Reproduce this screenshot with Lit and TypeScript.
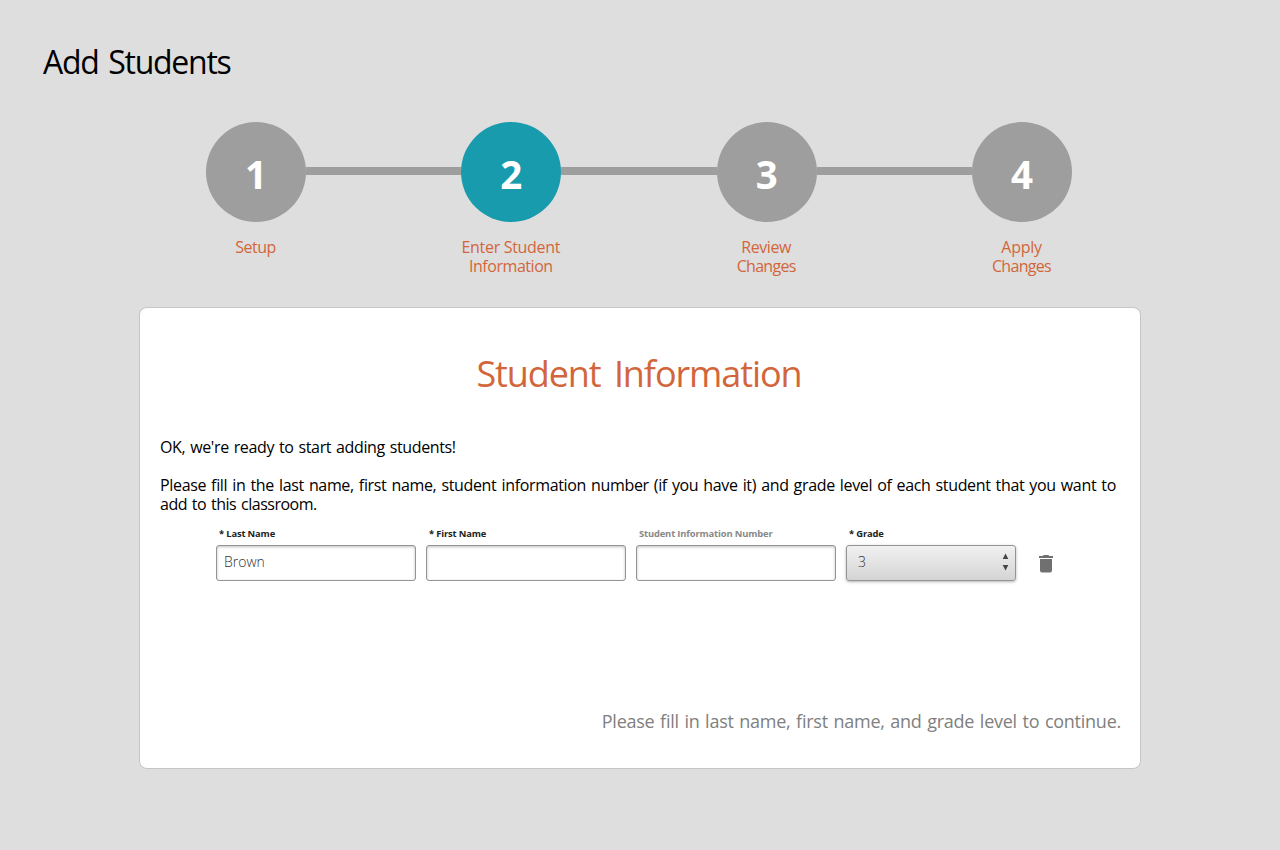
import { LitElement, html, css } from "lit";
import { customElement } from "lit/decorators.js";
import { classMap } from "lit/directives/class-map.js";

interface StepLine { text: string; tracking: number; }
interface Step { num: number; active?: boolean; lines: StepLine[]; }

const STEPS: Step[] = [
  { num: 1, lines: [{ text: "Setup", tracking: -0.55 }] },
  { num: 2, active: true, lines: [{ text: "Enter Student", tracking: -0.3 }, { text: "Information", tracking: -0.45 }] },
  { num: 3, lines: [{ text: "Review", tracking: -0.4 }, { text: "Changes", tracking: -0.7 }] },
  { num: 4, lines: [{ text: "Apply", tracking: -0.3 }, { text: "Changes", tracking: -0.7 }] },
];

@customElement("step-bar")
export class StepBar extends LitElement {
  static styles = css`
    :host { display: grid; grid-template-columns: repeat(4, 255.33px); padding-left: 128.33px; }
    .track { display: flex; align-items: center; height: 100px; }
    .line { flex: 1; height: 8px; margin-bottom: 2px; background: #9e9e9e; }
    .line.hidden { visibility: hidden; }
    .circle { width: 100px; height: 100px; border-radius: 50%; background: #9e9e9e; color: #fff;
      font-size: 38.5px; font-weight: 700; line-height: 104px; text-align: center; }
    .circle.active { background: #189bac; }
    .label { padding: 16px 1px 0 0; text-align: center; color: #d2663a; font-size: 16px; line-height: 19px; }
    .row { display: block; }
  `;
  render() {
    return STEPS.map((s, i) => html`
      <div>
        <div class="track">
          <div class=${classMap({ line: true, hidden: i === 0 })}></div>
          <div class=${classMap({ circle: true, active: !!s.active })}>${s.num}</div>
          <div class=${classMap({ line: true, hidden: i === STEPS.length - 1 })}></div>
        </div>
        <div class="label">${s.lines.map(l => html`<span class="row" style="letter-spacing:${l.tracking}px">${l.text}</span>`)}</div>
      </div>`);
  }
}

@customElement("student-row")
export class StudentRow extends LitElement {
  static styles = css`
    :host { display: flex; gap: 10px; padding-left: 56px; }
    .field { width: 200px; }
    .field.grade { width: 170px; }
    .label { display: block; height: 18px; padding-left: 3px; line-height: 14px; white-space: nowrap;
      font-size: 9.4px; font-weight: 700; letter-spacing: -0.15px; color: #222; }
    .label.optional { color: #888; }
    .box { box-sizing: border-box; display: flex; align-items: center; justify-content: space-between;
      height: 36px; padding: 0 6px 3px 7px; border: 1px solid #949494; border-radius: 3px; background: #fff;
      box-shadow: inset 0 1px 3px rgba(0,0,0,.25); font-size: 14px; font-weight: 300; color: #333; }
    .select { padding-left: 11px; background: linear-gradient(#f1f1f1, #d4d4d4); box-shadow: 0 1px 3px rgba(0,0,0,.3); }
    .arrows { display: block; margin-top: 1px; }
    .trash { display: block; margin: 26px 0 0 11px; }
  `;
  render() {
    return html`
      <div class="field"><span class="label">* Last Name</span><div class="box">Brown</div></div>
      <div class="field"><span class="label">* First Name</span><div class="box"></div></div>
      <div class="field"><span class="label optional">Student Information Number</span><div class="box"></div></div>
      <div class="field grade"><span class="label">* Grade</span>
        <div class="box select">3
          <svg class="arrows" width="7" height="18" viewBox="0 0 7 18"><path fill="#444" d="M3.500 .5 6.300 6H.7zM.7 12h5.600L3.500 17.500z"/></svg>
        </div>
      </div>
      <svg class="trash" width="18" height="22" viewBox="0 0 18 22"><path fill="#707070" d="M3 6h12v11.500a2 2 0 0 1-2 2H5a2 2 0 0 1-2-2zM2 3h3.700l1-1h4.600l1 1H16v2H2z"/></svg>`;
  }
}

@customElement("app-root")
export class AppRoot extends LitElement {
  static styles = css`
    :host { display: block; box-sizing: border-box; height: 850px; overflow: hidden; background: #dedede;
      font-family: "Open Sans", sans-serif; color: #000; }
    h1 { margin: 0; padding: 40px 0 0 43px; height: 82px; font-size: 32px; font-weight: 400; line-height: 44px; letter-spacing: -1.25px; word-spacing: 2.5px; }
    .card { box-sizing: border-box; display: flex; flex-direction: column; width: 1002px; height: 462px; margin: 31px 0 0 139px;
      padding: 0 20px; border: 1px solid #c6c6c6; border-radius: 8px; background: #fff; }
    h2 { margin: 0; padding: 41px 2px 0 0; height: 89px; text-align: center; color: #d2663a; font-size: 36px; font-weight: 400; line-height: 50px; letter-spacing: -1.08px; word-spacing: 5px; }
    .intro { font-size: 16px; line-height: 19px; white-space: nowrap; }
    .line { display: block; }
    .greeting { margin-bottom: 19px; letter-spacing: -0.38px; word-spacing: 1.2px; }
    .first { letter-spacing: -0.34px; word-spacing: 1.2px; }
    .second { letter-spacing: -0.5px; word-spacing: 1.2px; }
    student-row { margin-top: 13px; }
    .hint { margin: auto -1px 0 0; padding-bottom: 35px; text-align: right; color: #808080; font-size: 18px; line-height: 24px; letter-spacing: -0.25px; word-spacing: 1.2px; }
  `;
  render() {
    return html`
      <h1>Add Students</h1>
      <step-bar></step-bar>
      <div class="card">
        <h2>Student Information</h2>
        <div class="intro">
          <span class="line greeting">OK, we're ready to start adding students!</span>
          <span class="line first">Please fill in the last name, first name, student information number (if you have it) and grade level of each student that you want to</span>
          <span class="line second">add to this classroom.</span>
        </div>
        <student-row></student-row>
        <div class="hint">Please fill in last name, first name, and grade level to continue.</div>
      </div>`;
  }
}
